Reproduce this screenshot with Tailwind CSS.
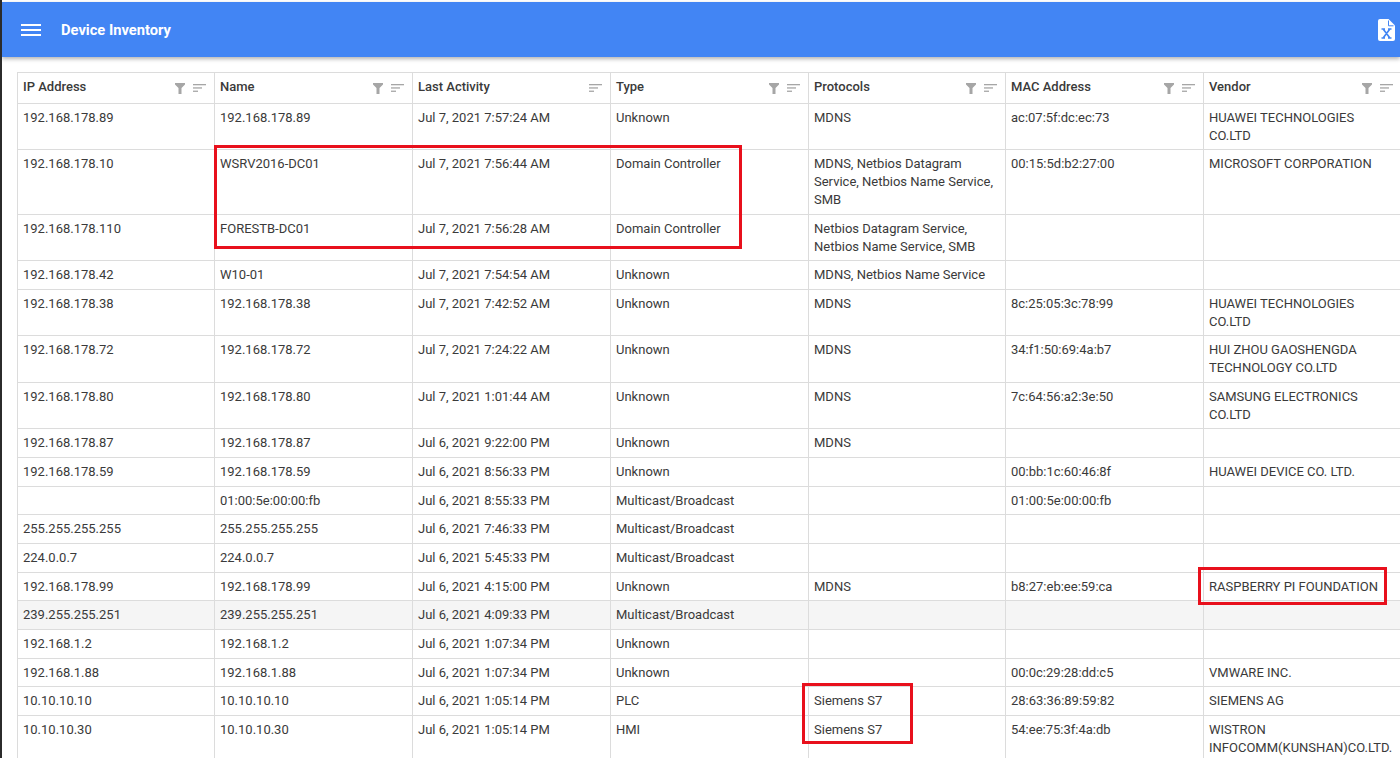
<!doctype html>
<html lang="en">
<head>
<meta charset="utf-8">
<title>Device Inventory</title>
<script src="https://cdn.jsdelivr.net/npm/@tailwindcss/browser@4"></script>
</head>
<body class="h-[758px] overflow-hidden bg-white font-['Roboto',sans-serif] text-[13px] leading-[18px] text-[#3a3a3a]">
<div class="relative h-[758px] overflow-hidden border-l-2 border-[#2b2b2b]">
  <header class="mt-[2px] flex h-[55px] items-center justify-between bg-[#4285f4] pl-[19px] pr-[5px] shadow-[0_2px_4px_rgba(0,0,0,0.3)]">
    <div class="flex items-center gap-[20px]">
      <svg class="h-[12px] w-[20px]" viewBox="0 0 20 12" fill="#fff"><rect width="20" height="2"/><rect y="5" width="20" height="2"/><rect y="10" width="20" height="2"/></svg>
      <h1 class="text-[14.7px] font-bold text-white">Device Inventory</h1>
    </div>
    <svg class="h-[22px] w-[17px]" viewBox="0 0 17 22">
      <path d="M2 0H10.5L17 6.5V20a2 2 0 0 1-2 2H2a2 2 0 0 1-2-2V2a2 2 0 0 1 2-2Z" fill="#fff"/>
      <path d="M10.5 1.5V6.8H15.5" fill="none" stroke="#4285f4" stroke-width="1"/>
      <path d="M5.5 10.5 11.5 18.5M11.5 10.5 5.5 18.5M3.5 10H7M10 10H13.5M3.5 19H7M10 19H13.5" fill="none" stroke="#4285f4" stroke-width="1.7"/>
    </svg>
  </header>
  <div class="pl-[15px] pt-[15px]">
    <table class="w-[1384px] table-fixed border-collapse [&_td]:border [&_td]:border-[#dcdcdc] [&_td]:px-[5px] [&_td]:pt-[5px] [&_td]:align-top [&_th]:border [&_th]:border-[#dcdcdc] [&_th]:px-[5px] [&_th]:text-left [&_th]:font-medium">
      <colgroup>
        <col class="w-[197px]"><col class="w-[198px]"><col class="w-[198px]"><col class="w-[198px]"><col class="w-[197px]"><col class="w-[198px]"><col class="w-[198px]">
      </colgroup>
      <thead>
        <tr class="h-[31px]">
          <th><div class="flex items-center justify-between pr-[3px]"><span class="pb-[3px]">IP Address</span><span class="flex items-center gap-[8px]"><svg class="h-[11px] w-[10px]" viewBox="0 0 10 11" fill="#a6a6a6"><path d="M0 0H10V1.5L6.5 5V11H3.5V5L0 1.5Z"/></svg><svg class="h-[8px] w-[13px]" viewBox="0 0 13 8" fill="#a6a6a6"><rect width="13" height="1.3"/><rect y="3.3" width="9" height="1.3"/><rect y="6.6" width="5" height="1.3"/></svg></span></div></th>
          <th><div class="flex items-center justify-between pr-[3px]"><span class="pb-[3px]">Name</span><span class="flex items-center gap-[8px]"><svg class="h-[11px] w-[10px]" viewBox="0 0 10 11" fill="#a6a6a6"><path d="M0 0H10V1.5L6.5 5V11H3.5V5L0 1.5Z"/></svg><svg class="h-[8px] w-[13px]" viewBox="0 0 13 8" fill="#a6a6a6"><rect width="13" height="1.3"/><rect y="3.3" width="9" height="1.3"/><rect y="6.6" width="5" height="1.3"/></svg></span></div></th>
          <th><div class="flex items-center justify-between pr-[3px]"><span class="pb-[3px]">Last Activity</span><span class="flex items-center"><svg class="h-[8px] w-[13px]" viewBox="0 0 13 8" fill="#a6a6a6"><rect width="13" height="1.3"/><rect y="3.3" width="9" height="1.3"/><rect y="6.6" width="5" height="1.3"/></svg></span></div></th>
          <th><div class="flex items-center justify-between pr-[3px]"><span class="pb-[3px]">Type</span><span class="flex items-center gap-[8px]"><svg class="h-[11px] w-[10px]" viewBox="0 0 10 11" fill="#a6a6a6"><path d="M0 0H10V1.5L6.5 5V11H3.5V5L0 1.5Z"/></svg><svg class="h-[8px] w-[13px]" viewBox="0 0 13 8" fill="#a6a6a6"><rect width="13" height="1.3"/><rect y="3.3" width="9" height="1.3"/><rect y="6.6" width="5" height="1.3"/></svg></span></div></th>
          <th><div class="flex items-center justify-between pr-[3px]"><span class="pb-[3px]">Protocols</span><span class="flex items-center gap-[8px]"><svg class="h-[11px] w-[10px]" viewBox="0 0 10 11" fill="#a6a6a6"><path d="M0 0H10V1.5L6.5 5V11H3.5V5L0 1.5Z"/></svg><svg class="h-[8px] w-[13px]" viewBox="0 0 13 8" fill="#a6a6a6"><rect width="13" height="1.3"/><rect y="3.3" width="9" height="1.3"/><rect y="6.6" width="5" height="1.3"/></svg></span></div></th>
          <th><div class="flex items-center justify-between pr-[3px]"><span class="pb-[3px]">MAC Address</span><span class="flex items-center gap-[8px]"><svg class="h-[11px] w-[10px]" viewBox="0 0 10 11" fill="#a6a6a6"><path d="M0 0H10V1.5L6.5 5V11H3.5V5L0 1.5Z"/></svg><svg class="h-[8px] w-[13px]" viewBox="0 0 13 8" fill="#a6a6a6"><rect width="13" height="1.3"/><rect y="3.3" width="9" height="1.3"/><rect y="6.6" width="5" height="1.3"/></svg></span></div></th>
          <th><div class="flex items-center justify-between pr-[3px]"><span class="pb-[3px]">Vendor</span><span class="flex items-center gap-[8px]"><svg class="h-[11px] w-[10px]" viewBox="0 0 10 11" fill="#a6a6a6"><path d="M0 0H10V1.5L6.5 5V11H3.5V5L0 1.5Z"/></svg><svg class="h-[8px] w-[13px]" viewBox="0 0 13 8" fill="#a6a6a6"><rect width="13" height="1.3"/><rect y="3.3" width="9" height="1.3"/><rect y="6.6" width="5" height="1.3"/></svg></span></div></th>
        </tr>
      </thead>
      <tbody>
        <tr class="h-[46px]"><td>192.168.178.89</td><td>192.168.178.89</td><td>Jul 7, 2021 7:57:24 AM</td><td>Unknown</td><td>MDNS</td><td>ac:07:5f:dc:ec:73</td><td>HUAWEI TECHNOLOGIES CO.LTD</td></tr>
        <tr class="h-[65px]"><td>192.168.178.10</td><td>WSRV2016-DC01</td><td>Jul 7, 2021 7:56:44 AM</td><td>Domain Controller</td><td>MDNS, Netbios Datagram Service, Netbios Name Service, SMB</td><td>00:15:5d:b2:27:00</td><td>MICROSOFT CORPORATION</td></tr>
        <tr class="h-[46px]"><td>192.168.178.110</td><td>FORESTB-DC01</td><td>Jul 7, 2021 7:56:28 AM</td><td>Domain Controller</td><td>Netbios Datagram Service, Netbios Name Service, SMB</td><td></td><td></td></tr>
        <tr class="h-[29px]"><td>192.168.178.42</td><td>W10-01</td><td>Jul 7, 2021 7:54:54 AM</td><td>Unknown</td><td>MDNS, Netbios Name Service</td><td></td><td></td></tr>
        <tr class="h-[46px]"><td>192.168.178.38</td><td>192.168.178.38</td><td>Jul 7, 2021 7:42:52 AM</td><td>Unknown</td><td>MDNS</td><td>8c:25:05:3c:78:99</td><td>HUAWEI TECHNOLOGIES CO.LTD</td></tr>
        <tr class="h-[47px]"><td>192.168.178.72</td><td>192.168.178.72</td><td>Jul 7, 2021 7:24:22 AM</td><td>Unknown</td><td>MDNS</td><td>34:f1:50:69:4a:b7</td><td>HUI ZHOU GAOSHENGDA TECHNOLOGY CO.LTD</td></tr>
        <tr class="h-[46px]"><td>192.168.178.80</td><td>192.168.178.80</td><td>Jul 7, 2021 1:01:44 AM</td><td>Unknown</td><td>MDNS</td><td>7c:64:56:a2:3e:50</td><td>SAMSUNG ELECTRONICS CO.LTD</td></tr>
        <tr class="h-[29px]"><td>192.168.178.87</td><td>192.168.178.87</td><td>Jul 6, 2021 9:22:00 PM</td><td>Unknown</td><td>MDNS</td><td></td><td></td></tr>
        <tr class="h-[29px]"><td>192.168.178.59</td><td>192.168.178.59</td><td>Jul 6, 2021 8:56:33 PM</td><td>Unknown</td><td></td><td>00:bb:1c:60:46:8f</td><td>HUAWEI DEVICE CO. LTD.</td></tr>
        <tr class="h-[28px]"><td></td><td>01:00:5e:00:00:fb</td><td>Jul 6, 2021 8:55:33 PM</td><td>Multicast/Broadcast</td><td></td><td>01:00:5e:00:00:fb</td><td></td></tr>
        <tr class="h-[29px]"><td>255.255.255.255</td><td>255.255.255.255</td><td>Jul 6, 2021 7:46:33 PM</td><td>Multicast/Broadcast</td><td></td><td></td><td></td></tr>
        <tr class="h-[29px]"><td>224.0.0.7</td><td>224.0.0.7</td><td>Jul 6, 2021 5:45:33 PM</td><td>Multicast/Broadcast</td><td></td><td></td><td></td></tr>
        <tr class="h-[28px]"><td>192.168.178.99</td><td>192.168.178.99</td><td>Jul 6, 2021 4:15:00 PM</td><td>Unknown</td><td>MDNS</td><td>b8:27:eb:ee:59:ca</td><td>RASPBERRY PI FOUNDATION</td></tr>
        <tr class="h-[29px] bg-[#f5f5f5]"><td>239.255.255.251</td><td>239.255.255.251</td><td>Jul 6, 2021 4:09:33 PM</td><td>Multicast/Broadcast</td><td></td><td></td><td></td></tr>
        <tr class="h-[29px]"><td>192.168.1.2</td><td>192.168.1.2</td><td>Jul 6, 2021 1:07:34 PM</td><td>Unknown</td><td></td><td></td><td></td></tr>
        <tr class="h-[28px]"><td>192.168.1.88</td><td>192.168.1.88</td><td>Jul 6, 2021 1:07:34 PM</td><td>Unknown</td><td></td><td>00:0c:29:28:dd:c5</td><td>VMWARE INC.</td></tr>
        <tr class="h-[29px]"><td>10.10.10.10</td><td>10.10.10.10</td><td>Jul 6, 2021 1:05:14 PM</td><td>PLC</td><td>Siemens S7</td><td>28:63:36:89:59:82</td><td>SIEMENS AG</td></tr>
        <tr class="h-[46px]"><td>10.10.10.30</td><td>10.10.10.30</td><td>Jul 6, 2021 1:05:14 PM</td><td>HMI</td><td>Siemens S7</td><td>54:ee:75:3f:4a:db</td><td>WISTRON INFOCOMM(KUNSHAN)CO.LTD.</td></tr>
      </tbody>
    </table>
  </div>
  <div class="absolute left-[212px] top-[145px] h-[104px] w-[528px] border-[3px] border-[#e8101c]"></div>
  <div class="absolute left-[1196px] top-[567px] h-[38px] w-[189px] border-[3px] border-[#e8101c]"></div>
  <div class="absolute left-[800px] top-[683px] h-[61px] w-[111px] border-[3px] border-[#e8101c]"></div>
</div>
</body>
</html>
